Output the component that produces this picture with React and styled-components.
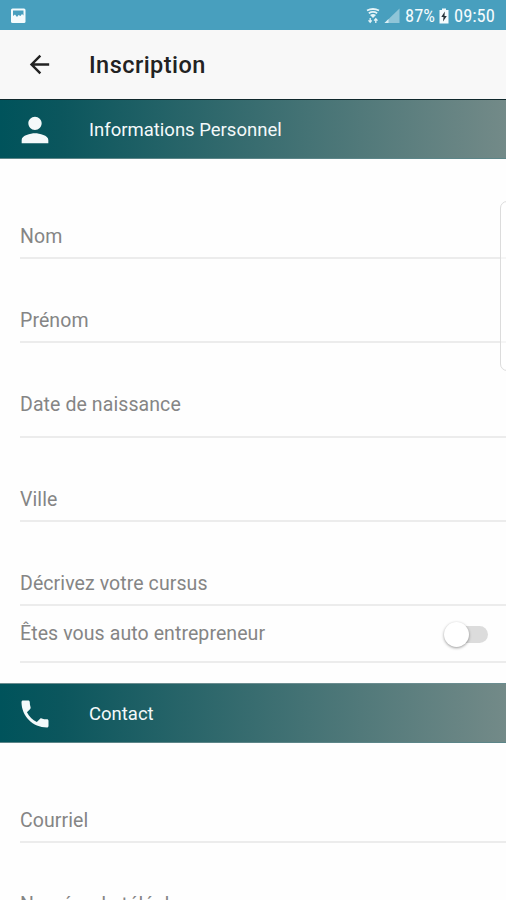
import styled, { createGlobalStyle } from "styled-components";
import { MdPerson, MdArrowBack } from "react-icons/md";

const GlobalStyle=createGlobalStyle`
body{
    margin: 0;
    background: #fefefe;
    font-family: Roboto, sans-serif;
}
`;

const Screen=styled.main`
width: 100%;
height: 900px;
overflow: hidden;
position: relative;
background: #fefefe;
`;

const StatusBar=styled.div`
display: flex;
align-items: center;
justify-content: space-between;
height: 30px;
box-sizing: border-box;
padding: 2px 10px 0 10px;
background: #489fbe;
color: #f4fbfd;
`;

const StatusGroup=styled.div`
display: flex;
align-items: center;
svg{
    display: block;
}
`;

const StatusText=styled.span`
font-family: "Roboto Condensed", Roboto, sans-serif;
font-size: 18.5px;
line-height: 28px;
width: ${(props) => props.$width}px;
margin: 0 4px 0 5px;
white-space: nowrap;
&:last-child{
    margin-right: 0;
}
`;

const AppBar=styled.header`
display: flex;
align-items: center;
height: 69px;
box-sizing: border-box;
padding-left: 25px;
background: #f8f8f8;
color: #222;
svg{
    display: block;
}
`;

const Title=styled.h1`
margin: 0 0 0 35px;
font-size: 23.5px;
font-weight: 500;
line-height: 28px;
letter-spacing: 0.45px;
`;

const SectionHeader=styled.div`
display: flex;
align-items: center;
height: 60px;
box-sizing: border-box;
padding: 1px 0 0 14px;
border-top: 1px solid ${(props) => props.$top};
border-bottom: 1px solid #5c8588;
background: linear-gradient(90deg, #00535b 0%, #0b565d 12%, #738a88 100%);
color: #f4f9fa;
`;

const SectionIcon=styled.span`
display: flex;
justify-content: center;
width: 41px;
`;

const SectionTitle=styled.h2`
margin: 0 0 0 34px;
font-size: 18.5px;
font-weight: 400;
letter-spacing: 0;
`;

const Fields=styled.div`
display: flex;
flex-direction: column;
margin-left: 20px;
padding-top: 16px;
padding-bottom: 20px;
`;

const Field=styled.div`
display: flex;
align-items: flex-end;
justify-content: space-between;
height: ${(props) => props.$height || 84}px;
box-sizing: border-box;
padding: 0 18px ${(props) => props.$bottom || 8}px 0;
border-bottom: 2px solid #ececec;
`;

const Label=styled.label`
font-size: 19.5px;
line-height: 24px;
letter-spacing: 0.09px;
color: #858585;
white-space: nowrap;
`;

const Track=styled.span`
display: flex;
align-items: center;
width: 41px;
height: 17px;
margin-bottom: 3px;
border-radius: 9px;
background: linear-gradient(90deg, transparent 12px, #dcdcdc 12px);
`;

const Thumb=styled.span`
flex: none;
width: 25px;
height: 25px;
margin-left: -3px;
border-radius: 50%;
background: #fff;
box-shadow: 0 1px 3px rgba(0, 0, 0, 0.4);
`;

// poignée du panneau latéral, posée sur le bord droit
const EdgePanel=styled.div`
position: absolute;
top: 201px;
right: -8px;
width: 14px;
height: 170px;
box-sizing: border-box;
border: 1px solid #dcdcdc;
border-radius: 7px;
background: rgba(255, 255, 255, 0.5);
`;

function PictureIcon() {
    return(
        <svg width="16" height="16" viewBox="0 0 16 16">
            <rect x="1" y="0.500" width="14.500" height="14.500" rx="1.500" fill="#f4fbfd" />
            <path d="M3 2.500h10.500v5l-1.500-1.500-1.500 2-2-1L7 9 5 6.500 3 8z" fill="#489fbe" />
        </svg>
    );
}

function WifiIcon() {
    return(
        <svg width="14" height="16" viewBox="0 0 14 16" fill="none" stroke="#e6f4f8">
            <path d="M1 2.500Q7 -0.500 13 2.500M2.800 5.200Q7 2.600 11.200 5.200" strokeWidth="1.800" />
            <path d="M4 7Q7 5.200 10 7L7 10z" fill="#e6f4f8" stroke="none" />
            <path d="M4.200 10v4M2.500 12.300l1.700 2 1.500-2M9.800 15v-4M8.100 12.700l1.700-2 1.700 2" strokeWidth="1.300" />
        </svg>
    );
}

function SignalIcon() {
    return(
        <svg width="20" height="16" viewBox="-4 0 20 16">
            <path d="M15.500 0.500V15H0.500z" fill="#8fc5d8" />
            <path d="M4.500 11v4H0.500z" fill="#d9eef5" />
        </svg>
    );
}

function BatteryIcon() {
    return(
        <svg width="10" height="16" viewBox="0 0 10 16">
            <path d="M3 0.500h4v1.500h2.500v13.500h-9V2H3z" fill="#f4fbfd" />
            <path d="M5.800 3.500L2.300 9h2.200L4 13.500 7.800 8H5.500z" fill="#26343a" />
        </svg>
    );
}

function PhoneIcon() {
    return(
        <svg width="36" height="36" viewBox="0 0 24 24" fill="currentColor">
            <path d="M6.620 10.790c1.440 2.830 3.760 5.140 6.590 6.590l2.200-2.200c.27-.27.67-.36 1.020-.24 1.120.37 2.330.57 3.570.57.55 0 1 .45 1 1V20c0 .55-.45 1-1 1-9.390 0-17-7.610-17-17 0-.55.45-1 1-1h3.500c.55 0 1 .45 1 1 0 1.250.2 2.450.57 3.570.11.35.03.74-.25 1.020l-2.200 2.200z" />
        </svg>
    );
}

function App() {
    return(
        <>
            <GlobalStyle />
            <Screen>
                <StatusBar>
                    <StatusGroup>
                        <PictureIcon />
                    </StatusGroup>
                    <StatusGroup>
                        <WifiIcon />
                        <SignalIcon />
                        <StatusText $width={30}>87%</StatusText>
                        <BatteryIcon />
                        <StatusText $width={42}>09:50</StatusText>
                    </StatusGroup>
                </StatusBar>
                <AppBar>
                    <MdArrowBack size={29} />
                    <Title>Inscription</Title>
                </AppBar>
                <SectionHeader $top="#10282c">
                    <SectionIcon><MdPerson size={40} /></SectionIcon>
                    <SectionTitle>Informations Personnel</SectionTitle>
                </SectionHeader>
                <Fields>
                    <Field><Label>Nom</Label></Field>
                    <Field><Label>Prénom</Label></Field>
                    <Field $height={95} $bottom={19}><Label>Date de naissance</Label></Field>
                    <Field><Label>Ville</Label></Field>
                    <Field><Label>Décrivez votre cursus</Label></Field>
                    <Field $height={57} $bottom={15}>
                        <Label>Êtes vous auto entrepreneur</Label>
                        <Track><Thumb /></Track>
                    </Field>
                </Fields>
                <SectionHeader $top="#6b8d90">
                    <SectionIcon><PhoneIcon /></SectionIcon>
                    <SectionTitle>Contact</SectionTitle>
                </SectionHeader>
                <Fields>
                    <Field><Label>Courriel</Label></Field>
                    <Field><Label>Numéro de téléphone</Label></Field>
                </Fields>
                <EdgePanel />
            </Screen>
        </>
    );
}

export default App;
